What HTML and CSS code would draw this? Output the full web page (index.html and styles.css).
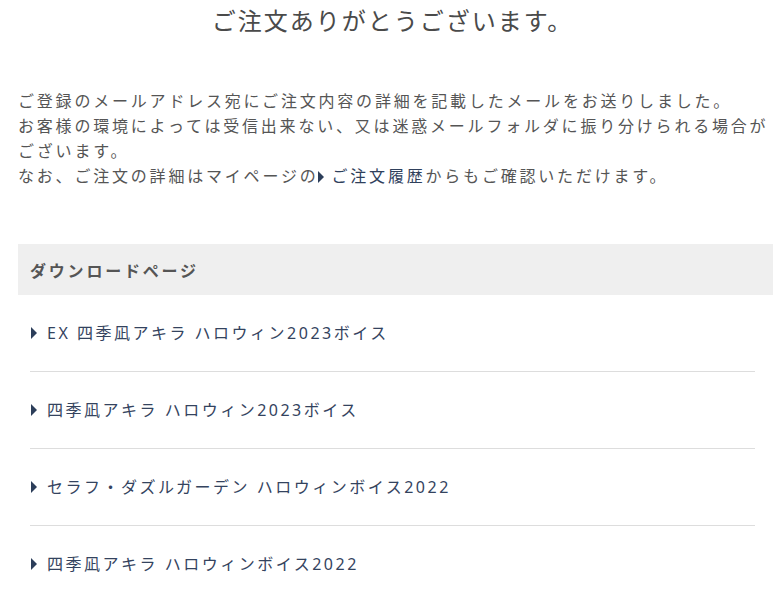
FILE: index.html
```html
<!DOCTYPE html>
<html lang="ja">
<head>
<meta charset="utf-8">
<title>ご注文ありがとうございます。</title>
<link rel="stylesheet" href="styles.css">
</head>
<body>
<main class="page">
  <h1 class="title">ご注文ありがとうございます。</h1>
  <p class="message">ご登録のメールアドレス宛にご注文内容の詳細を記載したメールをお送りしました。<br>お客様の環境によっては受信出来ない、又は迷惑メールフォルダに振り分けられる場合がございます。<br>なお、ご注文の詳細はマイページの<a class="link" href="#"><span class="tri tri-inline"></span>ご注文履歴</a>からもご確認いただけます。</p>
  <section class="downloads">
    <h2 class="downloads-head">ダウンロードページ</h2>
    <ul class="dl-list">
      <li class="dl-item"><a href="#" class="dl-link"><span class="tri"></span>EX 四季凪アキラ ハロウィン2023ボイス</a></li>
      <li class="dl-item"><a href="#" class="dl-link"><span class="tri"></span>四季凪アキラ ハロウィン2023ボイス</a></li>
      <li class="dl-item"><a href="#" class="dl-link"><span class="tri"></span>セラフ・ダズルガーデン ハロウィンボイス2022</a></li>
      <li class="dl-item"><a href="#" class="dl-link"><span class="tri"></span>四季凪アキラ ハロウィンボイス2022</a></li>
    </ul>
  </section>
</main>
</body>
</html>
```
FILE: styles.css
```css
html, body {
  margin: 0;
  padding: 0;
  background: #fff;
}
body {
  font-family: "Noto Sans", "Noto Sans CJK JP", sans-serif;
  color: #555;
  overflow: hidden;
}
.page {
  width: 773px;
}
.title {
  margin: 0;
  padding: 4px 0 0 12px;
  font-size: 24px;
  font-weight: 400;
  line-height: 34px;
  letter-spacing: 2px;
  text-align: center;
  color: #4a4a4a;
}
.message {
  margin: 51px 0 0 18px;
  width: 755px;
  font-size: 16px;
  line-height: 25px;
  letter-spacing: 2.8px;
  color: #555;
}
.link {
  color: #2f405c;
  text-decoration: none;
}
.tri {
  display: inline-block;
  width: 0;
  height: 0;
  border-style: solid;
  border-width: 6px 0 6px 6px;
  border-color: transparent transparent transparent #2c3e5a;
}
.tri-inline {
  margin: 0 7px 0 0;
  vertical-align: -1px;
}
.downloads {
  margin: 55px 0 0 18px;
}
.downloads-head {
  margin: 0;
  background: #efefef;
  height: 51px;
  padding: 0 12px;
  display: flex;
  align-items: center;
  font-size: 16px;
  font-weight: 700;
  letter-spacing: 2.8px;
  color: #555;
}
.dl-list {
  list-style: none;
  margin: 0 18px 0 12px;
  padding: 0;
}
.dl-item {
  border-bottom: 1px solid #dddddd;
}
.dl-link {
  display: flex;
  align-items: center;
  padding: 25px 0 25px 1px;
  line-height: 26px;
  font-size: 16px;
  letter-spacing: 2.5px;
  color: #34435e;
  text-decoration: none;
}
.dl-link .tri {
  margin-right: 10px;
}
```
